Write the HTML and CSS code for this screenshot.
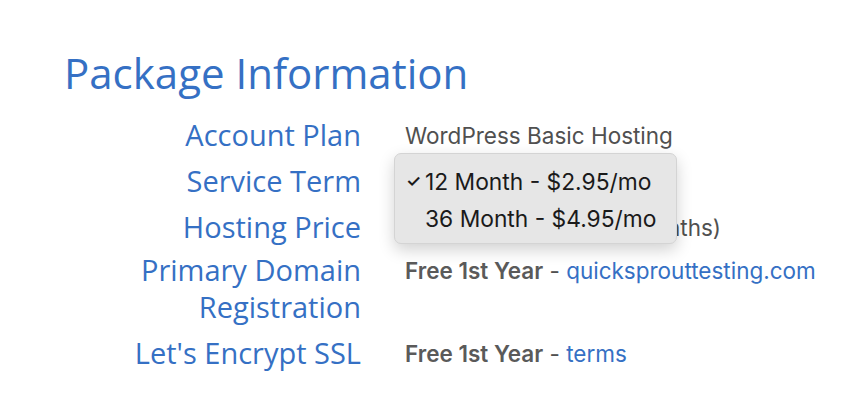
FILE: index.html
```html
<!DOCTYPE html>
<html>
<head>
<meta charset="utf-8">
<link rel="stylesheet" href="styles.css">
</head>
<body>
<div class="page">
  <h1 class="title">Package Information</h1>
  <div class="rows">
    <div class="label">Account Plan</div>
    <div class="value plain">WordPress Basic Hosting</div>

    <div class="label">Service Term</div>
    <div class="value select-cell">
      <div class="select-closed">12 Month - $2.95/mo</div>
      <div class="menu">
        <div class="opt"><span class="check">✓</span>12 Month - $2.95/mo</div>
        <div class="opt">36 Month - $4.95/mo</div>
      </div>
    </div>

    <div class="label">Hosting Price</div>
    <div class="value plain">$135.40 (billed for 12 months)</div>

    <div class="label domain">Primary Domain<br>Registration</div>
    <div class="value domain"><b class="free">Free 1st Year</b> - <a class="link">quicksprouttesting.com</a></div>

    <div class="label">Let's Encrypt SSL</div>
    <div class="value"><b class="free">Free 1st Year</b> - <a class="link">terms</a></div>
  </div>
</div>
</body>
</html>
```
FILE: styles.css
```css
html, body { margin: 0; padding: 0; background: #fff; }
.page { padding: 46px 0 0 64px; width: 784px; }
.title {
  margin: 0;
  font-family: "Open Sans", sans-serif;
  font-weight: 400;
  font-size: 42px;
  line-height: 54px;
  color: #3570c4;
}
.rows {
  display: grid;
  grid-template-columns: 297px 1fr;
  column-gap: 44px;
  margin-top: 11px;
}
.label {
  font-family: "Open Sans", sans-serif;
  font-size: 29px;
  line-height: 37px;
  color: #3570c4;
  text-align: right;
  padding: 5px 0 4px;
}
.value {
  font-family: "Inter", sans-serif;
  font-size: 22.5px;
  line-height: 37px;
  color: #505050;
  padding: 6px 0 3px;
}
.label.domain { padding-top: 2px; }
.value.domain { padding-top: 3px; }
.plain { color: #505050; }
.free { font-weight: 600; color: #5a5a5a; }
.link { color: #3570c4; text-decoration: none; }
.select-cell { position: relative; }
.select-closed { visibility: hidden; }
.menu {
  position: absolute;
  left: -11px;
  top: -4px;
  width: 283px;
  height: 91px;
  box-sizing: border-box;
  background: #e6e6e6;
  border: 1px solid #d4d4d4;
  border-radius: 7px;
  box-shadow: 0 6px 16px rgba(0,0,0,0.18);
  padding: 9px 0 0 30px;
  font-family: "Inter", sans-serif;
  color: #1a1a1a;
}
.opt {
  position: relative;
  font-size: 22.8px;
  line-height: 37px;
}
.check {
  position: absolute;
  left: -19px;
  font-size: 17px;
  font-weight: 600;
}
```
